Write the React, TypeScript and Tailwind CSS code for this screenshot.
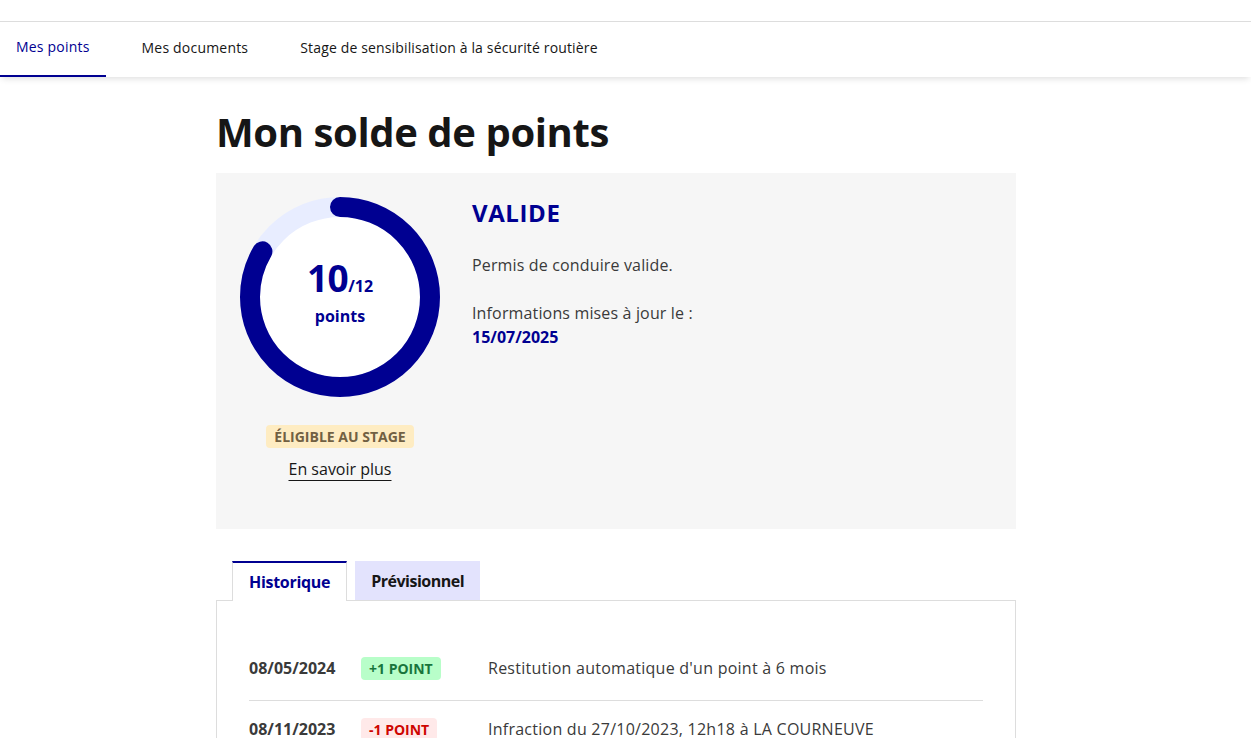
import React from "react";

const R = 90;
const C = 2 * Math.PI * R;

function Donut() {
  const dash = (C * 10) / 12;
  return (
    <div className="relative w-[200px] h-[200px]">
      <svg width="200" height="200" viewBox="0 0 200 200">
        <circle cx="100" cy="100" r={R} fill="#ffffff" stroke="#e8edff" strokeWidth="20" />
        <circle
          cx="100"
          cy="100"
          r={R}
          fill="none"
          stroke="#000091"
          strokeWidth="20"
          strokeLinecap="round"
          strokeDasharray={`${dash} ${C}`}
          transform="rotate(-90 100 100)"
        />
      </svg>
      <div className="absolute inset-0 flex flex-col items-center justify-center pb-[10px] text-[#000091]">
        <div className="flex items-baseline leading-[36px] pt-[3px]">
          <span className="text-[37px] font-bold tracking-[-0.5px]">10</span>
          <span className="text-[16px] font-bold">/12</span>
        </div>
        <div className="text-[16px] font-bold leading-6">points</div>
      </div>
    </div>
  );
}

function Row({
  date,
  badge,
  positive,
  text,
  last,
}: {
  date: string;
  badge: string;
  positive: boolean;
  text: string;
  last?: boolean;
}) {
  return (
    <div className={`flex items-center pt-4 pb-5 ${last ? "" : "border-b border-[#dddddd]"}`}>
      <div className="w-[112px] shrink-0 text-base font-bold text-[#3a3a3a] leading-6">{date}</div>
      <div className="w-[127px] shrink-0">
        <span
          className={`inline-flex items-center h-[23px] px-2 rounded-[4px] text-[14px] font-bold uppercase ${
            positive ? "bg-[#b8fec9] text-[#18753c]" : "bg-[#ffe9e9] text-[#ce0500]"
          }`}
        >
          {badge}
        </span>
      </div>
      <div className="text-base text-[#3a3a3a] leading-6 tracking-[0.25px]">{text}</div>
    </div>
  );
}

export default function App() {
  return (
    <div className="min-h-screen bg-white text-[#161616] font-['Open_Sans',sans-serif]">
      <div className="h-[21px]" />
      <nav className="flex gap-5 h-[56px] border-t border-[#dddddd] shadow-[0_4px_6px_-2px_rgba(0,0,0,0.12)]">
        <a className="flex items-center px-4 pb-[4px] text-sm tracking-[0.2px] text-[#000091] border-b-2 border-[#000091]">
          Mes points
        </a>
        <a className="flex items-center px-4 pb-[4px] text-sm tracking-[0.2px] text-[#161616]">Mes documents</a>
        <a className="flex items-center px-4 pb-[4px] text-sm tracking-[0.15px] text-[#161616]">
          Stage de sensibilisation à la sécurité routière
        </a>
      </nav>

      <main className="w-[800px] ml-[216px]">
        <h1 className="mt-[31px] mb-[17px] text-[40px] leading-[48px] font-bold tracking-[-0.4px] text-[#161616]">
          Mon solde de points
        </h1>

        <section className="bg-[#f6f6f6] h-[356px] pt-6 px-6 flex gap-8">
          <div className="w-[200px] shrink-0 flex flex-col items-center">
            <Donut />
            <span className="mt-[28px] inline-flex items-center h-[23px] px-2 rounded-[4px] bg-[#feecc2] text-[#716043] text-[14px] font-bold uppercase">
              Éligible au stage
            </span>
            <a className="mt-[9px] text-base leading-6 text-[#161616] underline underline-offset-[5px] decoration-1">
              En savoir plus
            </a>
          </div>
          <div className="flex flex-col">
            <div className="text-[24px] leading-8 font-bold tracking-[0.6px] text-[#000091]">VALIDE</div>
            <p className="mt-6 text-base leading-6 tracking-[0.15px] text-[#3a3a3a]">Permis de conduire valide.</p>
            <p className="mt-6 text-base leading-6 tracking-[0.15px] text-[#3a3a3a]">Informations mises à jour le :</p>
            <p className="text-base leading-6 font-bold text-[#000091]">15/07/2025</p>
          </div>
        </section>

        <div className="mt-8">
          <div className="relative z-10 flex gap-2 pl-4 -mb-px">
            <button className="h-[40px] px-4 bg-white border-x border-[#dddddd] border-t-2 border-t-[#000091] text-base font-bold tracking-[-0.3px] text-[#000091]">
              Historique
            </button>
            <button className="h-[39px] px-4 bg-[#e3e3fd] text-base font-bold tracking-[-0.5px] text-[#161616]">
              Prévisionnel
            </button>
          </div>
          <div className="border border-[#dddddd] pt-[39px] px-8 pb-6">
            <Row date="08/05/2024" badge="+1 point" positive text="Restitution automatique d'un point à 6 mois" />
            <Row
              date="08/11/2023"
              badge="-1 point"
              positive={false}
              text="Infraction du 27/10/2023, 12h18 à LA COURNEUVE"
              last
            />
          </div>
        </div>
      </main>
    </div>
  );
}
